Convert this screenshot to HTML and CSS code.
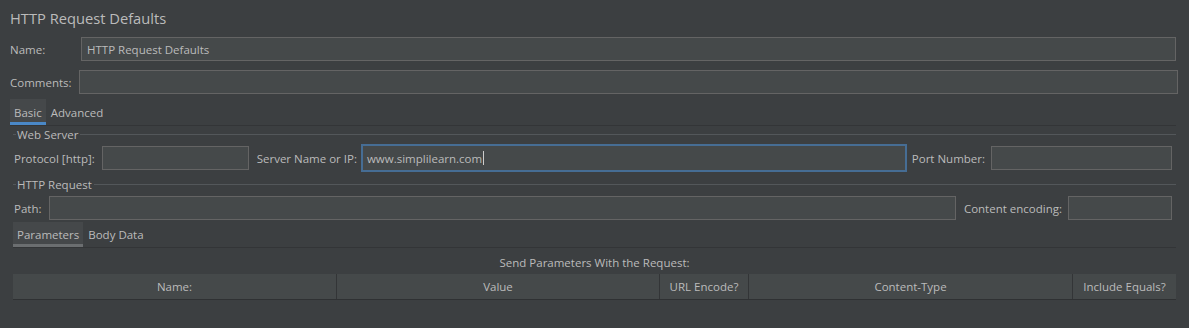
FILE: index.html
```html
<!DOCTYPE html>
<html>
<head>
<meta charset="utf-8">
<link rel="stylesheet" href="styles.css">
</head>
<body>
<div class="panel">
  <div class="title">HTTP Request Defaults</div>
  <div class="row row-name">
    <label class="lbl lbl-name">Name:</label>
    <div class="field grow">HTTP Request Defaults</div>
  </div>
  <div class="row row-comments">
    <label class="lbl lbl-comments">Comments:</label>
    <div class="field grow"></div>
  </div>
  <div class="tabs tabs-main">
    <div class="tab active">Basic</div>
    <div class="tab">Advanced</div>
  </div>
  <div class="group">
    <div class="legend"><span>Web Server</span></div>
    <div class="row row-server">
      <label class="lbl">Protocol [http]:</label>
      <div class="field f-protocol"></div>
      <label class="lbl lbl-server">Server Name or IP:</label>
      <div class="field grow focused">www.simplilearn.com<span class="caret"></span></div>
      <label class="lbl lbl-port">Port Number:</label>
      <div class="field f-port"></div>
    </div>
  </div>
  <div class="group">
    <div class="legend"><span>HTTP Request</span></div>
    <div class="row row-path">
      <label class="lbl">Path:</label>
      <div class="field grow"></div>
      <label class="lbl lbl-enc">Content encoding:</label>
      <div class="field f-enc"></div>
    </div>
  </div>
  <div class="tabs tabs-params">
    <div class="tab active grey">Parameters</div>
    <div class="tab">Body Data</div>
  </div>
  <div class="caption">Send Parameters With the Request:</div>
  <div class="table-head">
    <div class="th">Name:</div>
    <div class="th">Value</div>
    <div class="th">URL Encode?</div>
    <div class="th">Content-Type</div>
    <div class="th">Include Equals?</div>
  </div>
</div>
</body>
</html>
```
FILE: styles.css
```css
* { box-sizing: border-box; }
html, body { margin: 0; padding: 0; }
body {
  background: #3c3f41;
  color: #bbbbbb;
  font-family: "Open Sans", "Noto Sans", sans-serif;
  font-size: 11.5px;
  width: 1189px;
  height: 328px;
  overflow: hidden;
}
.title {
  font-size: 14.7px;
  line-height: 20px;
  padding: 8px 0 0 10px;
  height: 37px;
}
.row {
  display: flex;
  align-items: center;
}
.lbl { white-space: nowrap; }
.field {
  height: 24px;
  background: #45494a;
  border: 1px solid #646464;
  padding: 0 5px;
  display: flex;
  align-items: center;
  color: #bbbbbb;
  white-space: nowrap;
}
.grow { flex: 1; }
.row-name { padding: 0 13px 0 10px; height: 24px; }
.lbl-name { width: 71px; }
.row-comments { padding: 0 11px 0 10px; height: 24px; margin-top: 9px; }
.lbl-comments { width: 69px; }

.tabs {
  display: flex;
  align-items: stretch;
  border-bottom: 1px solid #333537;
}
.tabs-main { margin: 5px 13px 0 10px; height: 27px; }
.tab {
  padding: 0 4px;
  display: flex;
  align-items: center;
  position: relative;
}
.tab + .tab { padding-left: 5px; }
.tab.active { background: #45484a; }
.tab.active::after {
  content: "";
  position: absolute;
  left: 0; right: 0; bottom: 0;
  height: 3px;
  background: #4a88c7;
}
.tab.active.grey::after { background: #6b6e70; }

.group { margin: 0 13px 0 13px; }
.legend {
  display: flex;
  align-items: center;
  height: 16px;
}
.legend::before {
  content: "";
  width: 3px;
  border-top: 1px solid #53575a;
}
.legend::after {
  content: "";
  flex: 1;
  border-top: 1px solid #53575a;
}
.legend span { padding: 0 2px 0 1px; }
.row-server { height: 28px; margin: 2px 4px 0 1px; }
.f-protocol { width: 147px; margin-left: 7px; }
.lbl-server { margin-left: 8px; margin-right: 4px; }
.focused {
  height: 28px;
  border: 2px solid #466d94;
  padding: 0 4px;
}
.caret {
  display: inline-block;
  width: 1px;
  height: 14px;
  background: #cccccc;
  margin-left: 1px;
}
.lbl-port { margin-left: 5px; margin-right: 6px; }
.f-port { width: 181px; }
.group + .group .legend { margin-top: 4px; }
.row-path { height: 24px; margin: 4px 4px 0 1px; }
.row-path .lbl:first-child { margin-right: 8px; }
.lbl-enc { margin-left: 8px; margin-right: 6px; }
.f-enc { width: 104px; }

.tabs-params { margin: 2px 13px 0 13px; height: 26px; }
.caption {
  text-align: center;
  margin: 0 13px;
  height: 26px;
  line-height: 30px;
}
.table-head {
  display: grid;
  grid-template-columns: 324px 323px 89px 324px 103px;
  margin: 0 0 0 13px;
  width: 1163px;
  height: 26px;
  background: #45494a;
  border-bottom: 1px solid #2f3133;
}
.th {
  display: flex;
  align-items: center;
  justify-content: center;
  border-right: 1px solid #333537;
}
.th:last-child { border-right: none; }
```
